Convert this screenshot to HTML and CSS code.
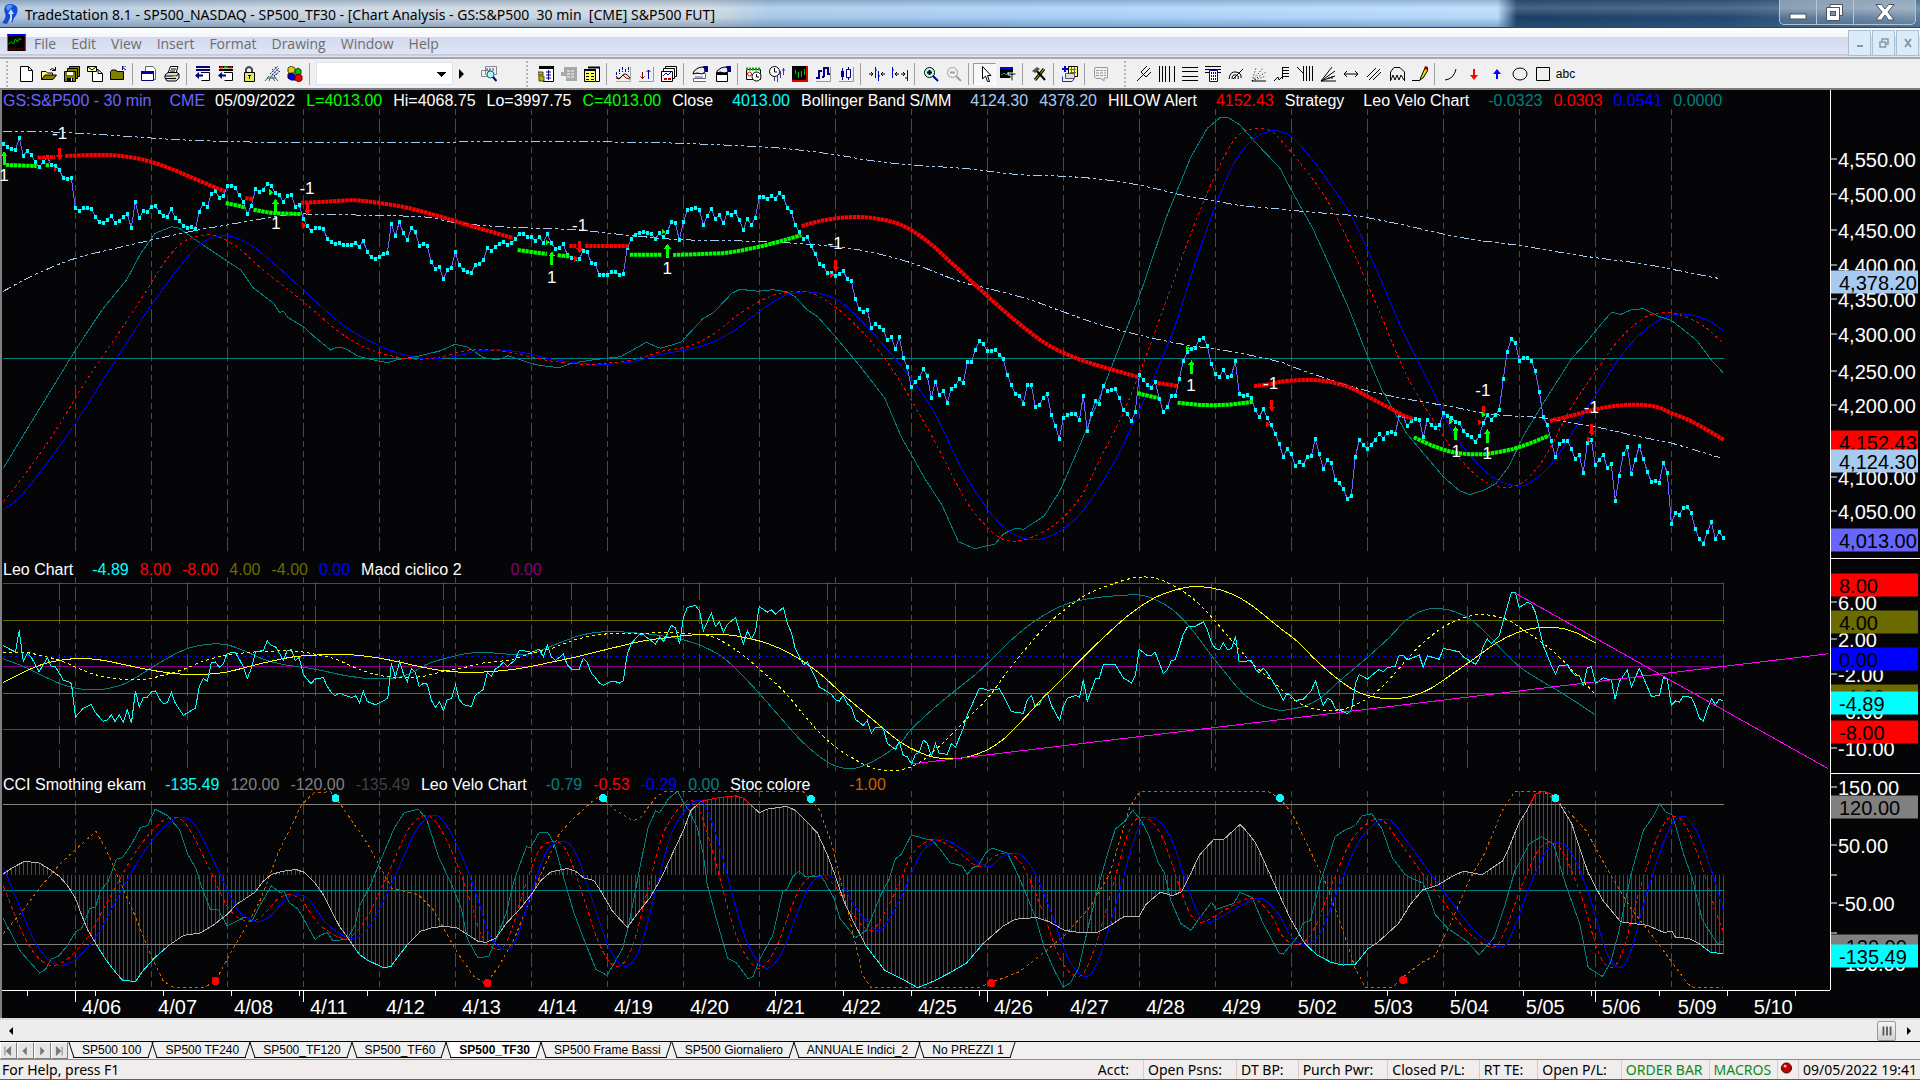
FILE: index.html
```html
<!DOCTYPE html>
<html lang="en">
  <head>
    <meta charset="UTF-8" />
    <meta name="viewport" content="width=device-width, initial-scale=1.0" />
    <title>TradeStation 8.1 - SP500_NASDAQ - SP500_TF30</title>
    <link rel="stylesheet" href="styles.css">
  </head>
  <body>
    <header class="titlebar">
      <svg class="app-icon" viewBox="0 0 18 22"><path d="M5 2Q12-1 16 4Q18 9 13 15L11 20L9 15L6 21L1 20Q6 14 4 10Q2 6 5 2Z" fill="#1549d8"/><path d="M10 6L13 11H11V17L9 19V11H7Z" fill="#c8dcff"/><path d="M5 3Q9 1 12 3L7 8Q5 6 5 3Z" fill="#4e9bff"/></svg>
      <h1>TradeStation 8.1 - SP500_NASDAQ - SP500_TF30 - [Chart Analysis - GS:S&amp;P500&nbsp; 30 min&nbsp; [CME] S&amp;P500 FUT]</h1>
      <div class="win-controls">
        <button aria-label="Minimize"><svg viewBox="0 0 24 20"><rect x="4" y="12" width="16" height="5" fill="#fff" stroke="#4a5260"/></svg></button>
        <button aria-label="Restore"><svg viewBox="0 0 24 20"><path d="M7 2.500H19.500V13.500H16.500V5.500H7Z" fill="#fff" stroke="#4a5260"/><path d="M3.500 5.500H16.500V18.500H3.500Z" fill="#fff" stroke="#4a5260"/><rect x="7.500" y="9.500" width="5" height="4" fill="#7d93ab" stroke="#4a5260"/></svg></button>
        <button class="close" aria-label="Close"><svg viewBox="0 0 24 20"><path d="M3 2.500H8.500L12 7L15.500 2.500H21L15 10L21 18H15.500L12 13L8.500 18H3L9 10Z" fill="#fff" stroke="#4a5260"/></svg></button>
      </div>
    </header>

    <nav class="menubar">
      <svg class="doc-icon" viewBox="0 0 18 17"><rect width="18" height="17"/><rect width="18" height="2" fill="#00f"/><path d="M1 10L4 8L6 10L8 5L10 8L12 4L14 6" fill="none" stroke="#0c0"/><path d="M1 15H16" stroke="#a00" stroke-dasharray="2 1"/><path d="M17.500 2V17" stroke="#800"/></svg>
      <button>File</button><button>Edit</button><button>View</button><button>Insert</button><button>Format</button><button>Drawing</button><button>Window</button><button>Help</button>
      <div class="mdi-controls">
        <button aria-label="Minimize chart"><svg viewBox="0 0 16 16"><path d="M5 11H11" stroke="#8397ab" stroke-width="2"/></svg></button>
        <button aria-label="Restore chart"><svg viewBox="0 0 16 16"><path d="M6 6V4H12V9H10M4 7H9.500V12H4Z" fill="none" stroke="#8397ab" stroke-width="1.500"/></svg></button>
        <button aria-label="Close chart"><svg viewBox="0 0 16 16"><path d="M5 4L11 12M11 4L5 12" stroke="#8397ab" stroke-width="2"/></svg></button>
      </div>
    </nav>

    <div class="toolbar">
      <i class="grip"></i>
      <button aria-label="New"><svg viewBox="0 0 16 16"><path d="M2.500 .5H10.500L14.500 4.500V15.500H2.500Z" fill="#fff" stroke="#000"/><path d="M10.500 .5V4.500H14.500" fill="none" stroke="#000"/></svg></button>
      <button aria-label="Open"><svg viewBox="0 0 16 16"><path d="M.5 13.500V5.500H5L6.500 7H11.500V9" fill="#ffff80" stroke="#000"/><path d="M.5 13.500L4 9H15.500L12 13.500Z" fill="#808000" stroke="#000"/><path d="M9 4Q11 1 14 4M14.500 1V4.500H11" fill="none" stroke="#000"/></svg></button>
      <button aria-label="Save all"><svg viewBox="0 0 16 16"><path d="M5.500 .5H15.500V10.500H5.500Z" fill="#808000" stroke="#000"/><path d="M3.500 2.500H13.500V12.500H3.500Z" fill="#808000" stroke="#000"/><path d="M.5 5.500H11.500V15.500H.5Z" fill="#808000" stroke="#000"/><path d="M3 6H9V9H3Z" fill="#fff"/><path d="M3 12H9V15H3Z"/><path d="M7 12H8V15H7Z" fill="#fff"/></svg></button>
      <button aria-label="Mail"><svg viewBox="0 0 16 16"><path d="M5.500 3.500H11L15.500 7.500V15.500H5.500Z" fill="#fff" stroke="#000"/><path d="M.5 .5H9.500V5.500H.5Z" fill="#ffffb0" stroke="#000"/><path d="M.5 .5L5 4L9.500 .5M11 4V7.500H15" fill="none" stroke="#000"/></svg></button>
      <button aria-label="Close folder"><svg viewBox="0 0 16 16"><path d="M.5 13.500V5.500L2 4H6L7 5.500H13.500V13.500Z" fill="#808000" stroke="#000"/><path d="M12 0H16M12.500 0V4M12 1L16 4" stroke="#000080" fill="none"/></svg></button>
      <i class="sep"></i>
      <button aria-label="Page"><svg viewBox="0 0 16 16"><path d="M4.500 .5H12L14.500 3.500V13.500H4.500Z" fill="#fff" stroke="#666"/><path d="M.5 5.500H12.500V14.500H.5Z" fill="#fff" stroke="#000080"/><path d="M0 5H13V8H0Z" fill="#0000a0"/></svg></button>
      <button aria-label="Print"><svg viewBox="0 0 16 16"><path d="M4 7L6.500 .5H14L12 7Z" fill="#fff" stroke="#000"/><path d="M1 9L4 6.500H13L15 8V12L12 15H3L1 12Z" fill="#ddd" stroke="#000"/><path d="M1 10H12L15 8M1 12.500H12M7 3H12M6 5H11" stroke="#000" fill="none"/><path d="M9 10H12V12H9Z" fill="#e8e000"/></svg></button>
      <i class="sep"></i>
      <button aria-label="Undo zoom"><svg viewBox="0 0 16 16"><path d="M1 1H15M1 4H15" stroke="#000080" stroke-width="2"/><path d="M6 6.500H14.500V14.500H6.500" fill="#fff" stroke="#000"/><path d="M0 9.500L4 6V8.500H8V10.500H4V13Z" fill="#000080"/></svg></button>
      <button aria-label="Colour rows"><svg viewBox="0 0 16 16"><path d="M1 1H15M1 4H15" stroke="#000" stroke-width="2"/><path d="M2 1.500H5M11 1.500H14" stroke="red" stroke-width="2"/><path d="M6 1.500H10" stroke="#0c0" stroke-width="2"/><path d="M6 6.500H14.500V14.500H6.500" fill="#fff" stroke="#000"/><path d="M0 9.500L4 6V8.500H8V10.500H4V13Z" fill="#000080"/></svg></button>
      <button aria-label="Lock"><svg viewBox="0 0 16 16"><path d="M5 7V3Q8 -1 11 3V7" fill="none" stroke="#444" stroke-width="2"/><path d="M3.500 6.500H13.500V15.500H3.500Z" fill="#e8e860" stroke="#000"/><path d="M7 9H10V10H9V13H8V10H7Z"/></svg></button>
      <button aria-label="Satellite"><svg viewBox="0 0 16 16"><path d="M1 15L5 10M5 15L7 10L11 15M10 10L14 15M3 12H12" stroke="#555" fill="none"/><path d="M5 11L9 7L11 10Z" fill="#40e0e0"/><path d="M6 8L14 0M8 9L15 2M10 10L16 5M8 3L13 9M11 1L15 6" stroke="#24248c" stroke-dasharray="2 1"/></svg></button>
      <button aria-label="Cubes"><svg viewBox="0 0 16 16"><path d="M1 2L4 0L8 2V6L4 8L1 6Z" fill="#e8c800" stroke="#443"/><path d="M8 4L11 2L14 4V8L11 9L8 8Z" fill="#00c000" stroke="#040"/><path d="M1 8L5 7L8 9V14L4 14L1 12Z" fill="#0000d0" stroke="#004"/><path d="M8 10L12 8L15 10V14L12 16L8 14Z" fill="#f00000" stroke="#600"/></svg></button>
      <i class="sep"></i>
      <select class="symbol" aria-label="Symbol"><option></option></select>
      <button class="go" aria-label="Go"><svg viewBox="0 0 16 16"><path d="M6 3L11 8L6 13Z"/></svg></button>
      <button class="lookup" aria-label="Symbol lookup"><svg viewBox="0 0 16 16"><path d="M4.500 .5H15.500V8.500H4.500ZM.5 4.500H9V10.500H.5Z" fill="#eee" stroke="#889"/><path d="M6 2V5M9 2V5M12 2V5" stroke="#447"/><circle cx="9.500" cy="8.500" r="3.500" fill="#aff" stroke="#256"/><path d="M12 11L15.500 15" stroke="#000080" stroke-width="2"/></svg></button>
      <i class="grip far"></i>
      <button aria-label="Symbol data"><svg viewBox="0 0 16 16"><path d="M1.500 1.500H15.500V15.500H5" fill="#fff" stroke="#000"/><path d="M1 1.500H16" stroke="#000" stroke-width="3"/><path d="M8 6H13M8 9H13M8 12H13M10.500 4V14" stroke="#000080"/><path d="M0 6H5V9H0ZM1 10H6V15H1Z" fill="#c0b000" stroke="#443"/></svg></button>
      <button disabled aria-label="Table"><svg viewBox="0 0 16 16"><path d="M3 1H16V15H5V10H0V6H3Z" fill="#a8a8a8"/><path d="M6 5H14M6 8H14M6 11H14" stroke="#fff" stroke-dasharray="3 1"/></svg></button>
      <button aria-label="Windows list"><svg viewBox="0 0 16 16"><path d="M4.500 1.500H15.500V15.500H12" fill="#fff" stroke="#000"/><path d="M.5 3.500H11.500V15.500H.5Z" fill="#ffff60" stroke="#000"/><path d="M0 4H12M4 1.500H16" stroke="#000" stroke-width="2"/><path d="M2 7.500H5M7 7.500H10M2 10.500H5M7 10.500H10M2 13.500H5M7 13.500H10" stroke="#000"/></svg></button>
      <i class="sep"></i>
      <button aria-label="Indicator"><svg viewBox="0 0 16 16"><path d="M15.500 1V15.500H1" stroke="#aaa" fill="none"/><path d="M1.500 6V10M4.500 3V8M7.500 1V6M10.500 3V7M13.500 1V6" stroke="#0000c0" stroke-dasharray="3 1"/><path d="M1 12L4 13L8 9L11 12L15 13" stroke="#a00000" fill="none"/><path d="M1 10Q4 15 7 10T15 12" stroke="#000" fill="none"/></svg></button>
      <button aria-label="Signals"><svg viewBox="0 0 16 16"><path d="M15.500 1V15.500H1" stroke="#999" fill="none"/><path d="M4.500 6V12.500M2.500 10.500L4.500 12.500L6.500 10.500" stroke="#900000" fill="none"/><path d="M10.500 13V4M8.500 6L10.500 4L12.500 6" stroke="#000090" fill="none"/></svg></button>
      <button aria-label="Strategies"><svg viewBox="0 0 16 16"><path d="M4.500 .5H15.500V10.500H4.500Z" fill="#fff" stroke="#000"/><path d="M2.500 2.500H13.500V12.500H2.500Z" fill="#fff" stroke="#000"/><path d="M.5 5.500H11.500V15.500H.5Z" fill="#fff" stroke="#000"/><path d="M2 10L5 7L7 9L10 6" stroke="#0000c0" fill="none"/><path d="M3 13H6M7 13H10" stroke="#c00000" stroke-width="2"/></svg></button>
      <i class="sep"></i>
      <button aria-label="Format symbol"><svg viewBox="0 0 16 16"><path d="M3.500 7.500H13.500V12.500H1.500V15.500H14" fill="#fff" stroke="#667"/><path d="M2 5L6 2L10 1L13 2V6L10 8L5 7L1 8Z" fill="#eee" stroke="#000"/><path d="M11 0H16V6H13Z" fill="#000080"/><path d="M3 11H11" stroke="#4060c0"/></svg></button>
      <button aria-label="Format window"><svg viewBox="0 0 16 16"><path d="M1.500 6.500H12.500V15.500H1.500Z" fill="#fff" stroke="#000"/><path d="M1 8H13" stroke="#000" stroke-width="2"/><path d="M2 5L6 2L10 1L13 2V6L9 7L5 6L2 7Z" fill="#eee" stroke="#000"/><path d="M11 0H16V6H13Z" fill="#000080"/></svg></button>
      <i class="sep"></i>
      <button aria-label="Sessions"><svg viewBox="0 0 16 16"><path d="M.5 3.500H14.500V13.500H.5Z" fill="#fff" stroke="#000"/><path d="M0 3H15" stroke="#00b000" stroke-width="3" stroke-dasharray="2 1"/><circle cx="10.500" cy="10.500" r="4.500" fill="#fff" stroke="#000"/><path d="M10.500 8V11H13" stroke="#000" fill="none"/><circle cx="3.500" cy="8" r="2" fill="none" stroke="red"/></svg></button>
      <button aria-label="Interval"><svg viewBox="0 0 16 16"><circle cx="5.500" cy="5.500" r="5" fill="#fff" stroke="#000"/><path d="M5.500 2V6H8" stroke="#000" fill="none"/><path d="M5.500 11V15M8.500 10V16M11.500 5V12M14.500 2V9M10 8H12M13 4H16" stroke="#3838a8"/></svg></button>
      <button aria-label="Bar chart"><svg viewBox="0 0 16 16"><path d="M0 0H16V16H0Z"/><path d="M15 0V15H0" stroke="#e00000" stroke-width="2" fill="none"/><path d="M3.500 4V8M6.500 6V12M9.500 5V11M12.500 3V9" stroke="#00d000"/></svg></button>
      <button aria-label="OHLC bars"><svg viewBox="0 0 16 16"><path d="M15.500 1V15.500H1" stroke="#999" fill="none"/><path d="M4 4V13M1 12H4M4 5H7M9 1V11M9 2H13M13 1V9M7 11H9M13 8H15" stroke="#000080" stroke-width="2"/></svg></button>
      <button aria-label="Candlesticks"><svg viewBox="0 0 16 16"><path d="M15.500 1V15.500H1" stroke="#999" fill="none"/><path d="M4.500 2V14M10.500 1V14" stroke="#000080"/><path d="M3 5H6V11H3Z" fill="#000080"/><path d="M8.500 3.500H12.500V11.500H8.500Z" fill="#fff" stroke="#000080"/></svg></button>
      <i class="sep"></i>
      <button aria-label="Tighten bars"><svg viewBox="0 0 16 16"><path d="M0 8H4M2 6L4 8L2 10M16 8H12M14 6L12 8L14 10" stroke="#000" fill="none"/><path d="M6.500 1V12M9.500 5V15M6 4H8M9 10H11" stroke="#0000c0"/></svg></button>
      <button aria-label="Widen bars"><svg viewBox="0 0 16 16"><path d="M3 8H7M5 6L3 8L5 10M13 8H9M11 6L13 8L11 10" stroke="#000" fill="none"/><path d="M.5 1V12M15.500 4V15M0 4H2M13 12H16" stroke="#0000c0"/></svg></button>
      <i class="sep"></i>
      <button aria-label="Zoom in"><svg viewBox="0 0 16 16"><circle cx="6.500" cy="6.500" r="5" fill="#bff" stroke="#000"/><path d="M4 6.500H9M6.500 4V9" stroke="#000" stroke-width="2"/><path d="M10 10L15 15" stroke="#000080" stroke-width="2"/></svg></button>
      <button disabled aria-label="Zoom out"><svg viewBox="0 0 16 16"><circle cx="6.500" cy="6.500" r="5" fill="none" stroke="#a0a0a0"/><path d="M4 6.500H9M10 10L15 15" stroke="#a0a0a0" stroke-width="2"/></svg></button>
      <i class="sep"></i>
      <button class="pressed" aria-label="Pointer"><svg viewBox="0 0 16 16"><path d="M5.500 .5V13L8.500 10L10.500 15.500H12.500L10.500 9.500H14Z" fill="#fff" stroke="#000"/></svg></button>
      <button aria-label="Data tip"><svg viewBox="0 0 16 16"><path d="M0 1H13V12H0Z"/><path d="M0 1H13V3H0Z" fill="#0000e0"/><path d="M1 9L4 7L6 9L8 6L10 8" stroke="#00d000" fill="none"/><path d="M8 7H16V9H13V15H11V9H8Z" stroke="#fff"/></svg></button>
      <i class="sep"></i>
      <button aria-label="Tools"><svg viewBox="0 0 16 16"><path d="M4 14L13 3" stroke="#000" stroke-width="3"/><path d="M4 14L13 3" stroke="#d8c800"/><path d="M5 4L14 14" stroke="#000" stroke-width="2"/><path d="M1 5L6 1L9 3L4 7Z" fill="#554"/></svg></button>
      <i class="sep"></i>
      <button aria-label="Add window"><svg viewBox="0 0 16 16"><path d="M0 3H6M3 0V6" stroke="#0000e0" stroke-width="2"/><path d="M6.500 .5H15.500V10.500H6.500Z" fill="#ffff60" stroke="#000"/><path d="M8 3.500H14M8 6.500H14M9.500 1V9M12.500 1V9" stroke="#665"/><path d="M3.500 7.500H12.500V12.500H3.500Z" fill="#ddd" stroke="#556"/><path d="M.5 10.500V15.500H10L12 13" fill="none" stroke="#2030a0"/></svg></button>
      <i class="sep"></i>
      <button disabled aria-label="Notes"><svg viewBox="0 0 16 16"><path d="M2 1.500H14.500V12H11V15L8 12.500H3L1.500 11V3Z" fill="none" stroke="#999"/><path d="M3 4.500H13M3 7H13M3 9.500H13" stroke="#999" stroke-dasharray="3 1"/></svg></button>
      <i class="grip draw"></i>
      <button aria-label="Andrew's pitchfork"><svg viewBox="0 0 16 16"><path d="M1 15L8 8M5 6L10 11M5 6L11 0M8 8L14 2M10 11L15 6" stroke="#000" fill="none"/></svg></button>
      <button aria-label="Vertical lines"><svg viewBox="0 0 16 16"><path d="M.5 0V16M3.500 0V16M6.500 0V16M10.500 0V16M15.500 0V16" stroke="#000"/></svg></button>
      <button aria-label="Horizontal lines"><svg viewBox="0 0 16 16"><path d="M0 1.500H16M0 5.500H16M0 10.500H16M0 14.500H16" stroke="#000"/></svg></button>
      <button aria-label="Price calculator"><svg viewBox="0 0 16 16"><path d="M0 .5H16M0 3.500H16M0 6.500H16" stroke="#000"/><path d="M4.500 4.500H12.500V15.500H4.500Z" fill="#fff" stroke="#0000a0"/><path d="M6 7H11M6 10H11M6 13H11" stroke="#0000a0" stroke-dasharray="1 1" stroke-width="2"/></svg></button>
      <button aria-label="Speed arcs"><svg viewBox="0 0 16 16"><path d="M1 13Q2 5 8 6T13 12M4 13Q4 8 8 9T10 13M5 13L15 3M7 11V13" stroke="#000" fill="none"/></svg></button>
      <button aria-label="Speed lines"><svg viewBox="0 0 16 16"><path d="M1 15L5 2M1 15L12 2M1 15L15 6M1 15L15 10" stroke="#000" stroke-dasharray="1 2"/><path d="M1 15H15" stroke="#000"/></svg></button>
      <button aria-label="Percent retracement"><svg viewBox="0 0 16 16"><path d="M0 15L4 11L5 14L9 10M8.500 1V13M9 1.500H15M9 4.500H15M9 7.500H15M9 10.500H15" stroke="#000" fill="none"/></svg></button>
      <button aria-label="Time cycles"><svg viewBox="0 0 16 16"><path d="M0 1L6 7M6.500 0V15M9.500 0V15M12.500 0V15M15.500 0V15" stroke="#000"/></svg></button>
      <button aria-label="Gann fan"><svg viewBox="0 0 16 16"><path d="M1 15L12 1M1 15L15 5M1 15L15 10M1 15H16M9 11V13M12 10V13" stroke="#000"/></svg></button>
      <button aria-label="Extended line"><svg viewBox="0 0 16 16"><path d="M1 8H15M4 5L1 8L4 11M12 5L15 8L12 11" stroke="#000" fill="none"/></svg></button>
      <button aria-label="Parallel lines"><svg viewBox="0 0 16 16"><path d="M1 11L10 2M3 14L14 3M7 14L15 6" stroke="#000"/></svg></button>
      <button aria-label="Arcs"><svg viewBox="0 0 16 16"><path d="M1.500 15V6L5 1.500H11L15.500 6V15M2 14L4 9L6 14M6 14L8 9L10 14M10 14L12 9L15 14" stroke="#000" fill="none"/></svg></button>
      <button aria-label="Pencil"><svg viewBox="0 0 16 16"><path d="M0 14.500H8" stroke="#000"/><path d="M9 11L13 2L16 4L11 12L8 14Z" fill="#e8e000" stroke="#000"/><path d="M13 0L16 1V4L12 3Z" fill="#a00000"/></svg></button>
      <i class="sep"></i>
      <button aria-label="Arc"><svg viewBox="0 0 16 16"><path d="M2 14Q11 13 13 3" stroke="#000" fill="none"/></svg></button>
      <button aria-label="Down arrow"><svg viewBox="0 0 16 16"><path d="M7 3H9V9H12L8 14L4 9H7Z" fill="red"/></svg></button>
      <button aria-label="Up arrow"><svg viewBox="0 0 16 16"><path d="M7 13H9V8H12L8 3L4 8H7Z" fill="#00f"/></svg></button>
      <button aria-label="Ellipse"><svg viewBox="0 0 16 16"><ellipse cx="8" cy="8" rx="7" ry="6" fill="none" stroke="#000"/></svg></button>
      <button aria-label="Rectangle"><svg viewBox="0 0 16 16"><path d="M1.500 1.500H14.500V14.500H1.500Z" fill="none" stroke="#000"/></svg></button>
      <button class="text-tool">abc</button>
    </div>

    <main class="chart">
      <section class="pane" id="price">
        <div class="plot">
          <p class="legend"><b class="sym">GS:S&amp;P500 - 30 min</b><b class="sym tight">CME</b><span class="white">05/09/2022</span><span class="lime">L=4013.00</span><span class="white">Hi=4068.75</span><span class="white">Lo=3997.75</span><span class="lime">C=4013.00</span><b>Close</b><span class="cyan">4013.00</span><b>Bollinger Band S/MM</b><span class="band">4124.30</span><span class="band">4378.20</span><b>HILOW Alert</b><span class="red">4152.43</span><b>Strategy</b><b>Leo Velo Chart</b><span class="teal">-0.0323</span><span class="red">0.0303</span><span class="blue">0.0541</span><span class="teal">0.0000</span></p>
          <svg class="canvas" viewBox="2 110 1828 449" preserveAspectRatio="none"></svg>
        </div>
        <div class="scale"></div>
      </section>
      <section class="pane" id="leo">
        <div class="plot">
          <p class="legend"><b>Leo Chart</b><span class="cyan">-4.89</span><span class="red">8.00</span><span class="red">-8.00</span><span class="olive">4.00</span><span class="olive">-4.00</span><span class="blue">0.00</span><b class="wide">Macd ciclico 2</b><span class="purple">0.00</span></p>
          <svg class="canvas" viewBox="2 579 1828 195" preserveAspectRatio="none"></svg>
        </div>
        <div class="scale"></div>
      </section>
      <section class="pane" id="cci">
        <div class="plot">
          <p class="legend"><b>CCI Smothing ekam</b><span class="cyan">-135.49</span><span class="gray">120.00</span><span class="gray">-120.00</span><span class="dim">-135.49</span><b>Leo Velo Chart</b><span class="teal">-0.79</span><span class="red">-0.53</span><span class="blue">-0.29</span><span class="teal">0.00</span><b class="wider">Stoc colore</b><span class="orange">-1.00</span></p>
          <svg class="canvas" viewBox="2 794 1828 196" preserveAspectRatio="none"></svg>
        </div>
        <div class="scale"></div>
      </section>
      <div class="timeline">
        <svg class="ticks" viewBox="2 0 1828 27" preserveAspectRatio="none"></svg>
        <ol class="dates"></ol>
      </div>
    </main>

    <div class="scrollbar">
      <button aria-label="Scroll left"><svg viewBox="0 0 16 16"><path d="M10 4V12L6 8Z"/></svg></button>
      <button class="thumb" aria-label="Scroll thumb"><svg viewBox="0 0 18 16"><path d="M5 3V13M9 3V13M13 3V13" stroke="#555" stroke-width="2"/></svg></button>
      <button aria-label="Scroll right"><svg viewBox="0 0 16 16"><path d="M6 4V12L10 8Z"/></svg></button>
    </div>

    <nav class="tabs">
      <button class="step" aria-label="First"><svg viewBox="0 0 16 16"><path d="M4.500 3V13M11 3V13L6 8Z" fill="#777" stroke="#777"/></svg></button>
      <button class="step" aria-label="Previous"><svg viewBox="0 0 16 16"><path d="M10 3V13L5 8Z" fill="#777"/></svg></button>
      <button class="step" aria-label="Next"><svg viewBox="0 0 16 16"><path d="M6 3V13L11 8Z" fill="#777"/></svg></button>
      <button class="step" aria-label="Last"><svg viewBox="0 0 16 16"><path d="M11.500 3V13M5 3V13L10 8Z" fill="#777" stroke="#777"/></svg></button>
      <button class="tab">SP500 100</button>
      <button class="tab">SP500 TF240</button>
      <button class="tab">SP500_TF120</button>
      <button class="tab">SP500_TF60</button>
      <button class="tab active">SP500_TF30</button>
      <button class="tab">SP500 Frame Bassi</button>
      <button class="tab">SP500 Giornaliero</button>
      <button class="tab">ANNUALE Indici_2</button>
      <button class="tab">No PREZZI 1</button>
    </nav>

    <footer class="status">
      <span class="help">For Help, press F1</span>
      <span>Acct:</span><span>Open Psns:</span><span>DT BP:</span><span>Purch Pwr:</span><span>Closed P/L:</span><span>RT TE:</span><span>Open P/L:</span>
      <span class="on">ORDER BAR</span><span class="on">MACROS</span>
      <span class="led"><svg viewBox="0 0 12 12"><circle cx="6" cy="6" r="5.500" fill="#c00000" stroke="#200"/><circle cx="4.500" cy="4" r="1.500" fill="#ffb0b0"/></svg></span>
      <span class="clock">09/05/2022 19:41</span>
    </footer>
    <script src="script.js"></script>
  </body>
</html>
```

FILE: styles.css
```css
* {
  margin: 0;
  padding: 0;
  box-sizing: border-box;
}

body {
  display: flex;
  flex-direction: column;
  height: 100vh;
  overflow: hidden;
  background: #f0f0f0;
  color: #000;
  font-family: "Open Sans", "Noto Sans", sans-serif;
  font-size: 14px;
}

button {
  border: none;
  background: none;
  font: inherit;
  color: inherit;
}

svg {
  display: block;
}

/* title bar */
.titlebar {
  display: flex;
  align-items: center;
  flex: 0 0 28px;
  padding-left: 1px;
  border-bottom: 1px solid #39424e;
  background:
    linear-gradient(rgba(70, 100, 130, 0.3), rgba(255, 255, 255, 0.2) 30%, rgba(255, 255, 255, 0) 65%, rgba(60, 95, 135, 0.4)),
    linear-gradient(90deg, #a9c2dc, #c3d1df 15%, #cbd5df 37%, #a5c6e6 40%, #a4cdf7 55%, #b4d8fb 78%, #1b3d64 79%, #24496f 90%, #597b9b);
}

.app-icon {
  width: 18px;
  height: 22px;
}

.titlebar h1 {
  flex: 1;
  margin-left: 6px;
  padding-top: 1px;
  font-family: "Noto Sans", sans-serif;
  font-size: 14px;
  font-weight: 400;
  white-space: nowrap;
}

.win-controls {
  display: flex;
  align-self: flex-start;
  height: 25px;
  margin-right: 4px;
  border: 1px solid #b5c4d3;
  border-top: none;
  border-radius: 0 0 5px 5px;
  background: linear-gradient(rgba(255, 255, 255, 0.4), rgba(255, 255, 255, 0.1));
}

.win-controls button {
  width: 37px;
  border-right: 1px solid #b5c4d3;
}

.win-controls .close {
  width: 61px;
  border: none;
}

.win-controls svg {
  width: 24px;
  height: 20px;
  margin: 0 auto;
}

/* menu */
.menubar {
  display: flex;
  align-items: center;
  flex: 0 0 31px;
  padding-left: 7px;
  border-bottom: 2px solid #a5a8b0;
  background: linear-gradient(#fff, #f3f5fa 30%, #d3daec 32%, #dfe5f5 90%, #b9bfd0 92%, #f0f0f0);
  color: #6d6d6d;
}

.menubar > button {
  padding: 1px 7px 0 8px;
}

.doc-icon {
  width: 19px;
  height: 17px;
}

.mdi-controls {
  display: flex;
  gap: 1px;
  align-self: flex-start;
  margin: 2px 1px 0 auto;
}

.mdi-controls button {
  width: 23px;
  height: 26px;
  border: 1px solid #a7c0d6;
  background: #dcebf8;
}

.mdi-controls svg {
  width: 16px;
  height: 16px;
  margin: 0 auto;
}

/* toolbar */
.toolbar {
  display: flex;
  align-items: center;
  flex: 0 0 31px;
  padding-left: 6px;
  border-bottom: 2px solid #7d7d7d;
  background: #f0f0f0;
}

.toolbar button {
  flex: none;
  width: 23px;
  height: 22px;
}

.toolbar svg {
  width: 16px;
  height: 16px;
  margin: 0 auto;
}

.toolbar .pressed {
  border: 1px solid #999;
  border-color: #999 #fff #fff #999;
  background: #f8f8f8;
}

.sep {
  flex: none;
  width: 1px;
  height: 22px;
  margin: 0 4px 0 3px;
  background: #a0a0a0;
}

.grip {
  flex: none;
  width: 3px;
  height: 26px;
  margin-right: 5px;
  border-left: 2px dotted #b5b5b5;
}

.grip.far {
  margin-left: 25px;
}

.grip.draw {
  margin-left: 12px;
}

.symbol {
  flex: none;
  width: 137px;
  height: 23px;
  margin-left: 2px;
  appearance: none;
  border: 1px solid #dde3ea;
  background: linear-gradient(#000, #000) right 6px top 9px / 9px 1px no-repeat,
    linear-gradient(#000, #000) right 7px top 10px / 7px 1px no-repeat,
    linear-gradient(#000, #000) right 8px top 11px / 5px 1px no-repeat,
    linear-gradient(#000, #000) right 9px top 12px / 3px 1px no-repeat,
    linear-gradient(#000, #000) right 10px top 13px / 1px 1px no-repeat, #fff;
}

.toolbar .go {
  width: 16px;
}

.toolbar .lookup {
  width: 25px;
  margin-left: 7px;
}

.toolbar .text-tool {
  font: 12px "Liberation Sans", Arial, sans-serif;
}

/* chart window */
.chart {
  display: grid;
  grid-template-rows: 469fr 215fr 216fr 28px;
  flex: 1;
  min-height: 0;
  border-left: 2px solid #808080;
  background: #050507;
  color: #fff;
  font-family: "Liberation Sans", Arial, sans-serif;
}

.pane {
  display: grid;
  grid-template-columns: 1fr 90px;
  min-height: 0;
}

.plot {
  display: flex;
  flex-direction: column;
  min-width: 0;
  min-height: 0;
}

.legend {
  flex: none;
  height: 20px;
  padding-left: 1px;
  font-size: 16px;
  line-height: 21px;
  white-space: nowrap;
}

.legend b {
  margin-right: 19px;
  font-weight: 400;
}

.legend span {
  margin-right: 11px;
}

.legend .sym {
  margin-right: 18px;
  color: #6666ff;
}

.legend .tight {
  margin-right: 10px;
}

.legend .wide {
  margin-right: 49px;
}

.legend .wider {
  margin-right: 39px;
}

.cyan { color: #00ffff; }
.lime { color: #00ff00; }
.red { color: #ff0000; }
.blue { color: #0000ff; }
.teal { color: #008080; }
.olive { color: #6b6b00; }
.purple { color: #800080; }
.gray { color: #808080; }
.dim { color: #404040; }
.orange { color: #c86400; }
.band { color: #a6caf0; }

.canvas {
  flex: 1;
  width: 100%;
  min-height: 0;
  overflow: visible;
  shape-rendering: crispEdges;
}

.canvas text {
  fill: #fff;
  font-size: 17px;
  text-anchor: middle;
}

.scale {
  position: relative;
  border-left: 1px solid #fff;
  border-bottom: 1px solid #fff;
}

#cci .scale {
  border-bottom: none;
}

.scale span {
  position: absolute;
  right: 0;
  left: 0;
  height: 23px;
  padding-left: 7px;
  font-size: 20px;
  line-height: 25px;
  transform: translateY(-50%);
}

.scale span::before {
  content: "";
  position: absolute;
  left: 0;
  top: 11px;
  width: 6px;
  height: 1px;
  background: #fff;
}

.scale .tag {
  margin-right: 2px;
  padding-left: 8px;
  color: #000;
}

.scale .tag::before {
  display: none;
}

.timeline {
  position: relative;
  margin-right: 90px;
  border-top: 1px solid #fff;
}

.ticks {
  position: absolute;
  width: 100%;
  height: 27px;
}

.dates {
  display: flex;
  padding: 4px 0 0 4%;
  list-style: none;
}

.dates li {
  flex: 0 0 4.33%;
  padding-left: 7px;
  font-size: 20px;
  line-height: 24px;
}

/* bottom bars */
.scrollbar {
  display: flex;
  align-items: center;
  flex: 0 0 23px;
  border-top: 2px solid #dcdcdc;
  background: #ededed;
}

.scrollbar button {
  width: 22px;
  height: 20px;
}

.scrollbar svg {
  width: 16px;
  height: 16px;
  margin: 0 auto;
}

.scrollbar .thumb {
  width: 19px;
  margin: 0 2px 0 auto;
  border: 1px solid #999;
  border-radius: 2px;
  background: linear-gradient(#f5f5f5, #d0d0d0);
}

.tabs {
  display: flex;
  flex: 0 0 18px;
  border-top: 1px solid #000;
  background: #f0f0f0;
  font: 12px "Liberation Sans", Arial, sans-serif;
}

.step {
  width: 17px;
  height: 17px;
  border: 1px solid;
  border-color: #fff #808080 #808080 #fff;
  background: #e6e6e6;
}

.step svg {
  width: 14px;
  height: 14px;
}

.tab {
  position: relative;
  height: 16px;
  margin-right: -2px;
  padding: 0 12px 0 14px;
  white-space: nowrap;
}

.tab::before,
.tab::after {
  content: "";
  position: absolute;
  top: 0;
  bottom: 0;
  left: 3px;
  right: 50%;
  border-left: 1px solid #000;
  border-bottom: 1px solid #000;
  transform: skewX(18deg);
}

.tab::after {
  left: 50%;
  right: 3px;
  border-left: none;
  border-right: 1px solid #000;
  transform: skewX(-18deg);
}

.tab.active {
  background: linear-gradient(#fff, #fff) center / 88px 100% no-repeat;
  font-weight: 700;
}

.status {
  display: flex;
  flex: 0 0 21px;
  min-height: 0;
  border-top: 1px solid #8c8c8c;
  border-bottom: 1px solid #51617a;
  background: #f0edec;
  font-family: "Noto Sans", sans-serif;
  line-height: 20px;
  white-space: nowrap;
}

.status span {
  padding: 0 14px 0 4px;
  border-left: 1px solid #d2cecd;
}

.status .help {
  flex: 1;
  padding-left: 2px;
  border: none;
}

.status .help + span {
  border: none;
}

.status .on {
  padding-right: 6px;
  color: #0c8a1c;
}

.status .led {
  padding: 2px 6px 0 3px;
}

.led svg {
  width: 11px;
  height: 12px;
}

.status .clock {
  padding-right: 3px;
}
```

FILE: script.js
```js
const NS = "http://www.w3.org/2000/svg";

// Series are digitised per third of the plot, thirds separated by "|".
const THIRD = 1568;
const UNIT_X = 2.45;
const priceUnit = { top: 100, y: 3 };
const lowerUnit = { top: 550, y: 2.958 };

const FIRST_X = 3.3;
const BAR = 4;
const LAST_X = 1723.5;

function points(data, unit, shift = 0) {
  return data.split("|").flatMap((part, i) =>
    part.trim().split(/\s+/).filter(Boolean).map((pair) => {
      const [x, y] = pair.split(",").map(Number);
      return [(x + i * THIRD + shift) / UNIT_X, unit.top + y / unit.y];
    })
  );
}

function add(svg, name, attrs, text) {
  const el = document.createElementNS(NS, name);
  for (const key in attrs) el.setAttribute(key, attrs[key]);
  if (text) el.textContent = text;
  svg.appendChild(el);
  return el;
}

const fmt = (n) => n.toFixed(1);

function straight(pts) {
  return "M" + pts.map(([x, y]) => `${fmt(x)} ${fmt(y)}`).join("L");
}

function curve(pts) {
  let d = `M${fmt(pts[0][0])} ${fmt(pts[0][1])}`;
  for (let i = 0; i < pts.length - 1; i++) {
    const p0 = pts[i - 1] || pts[i];
    const p1 = pts[i];
    const p2 = pts[i + 1];
    const p3 = pts[i + 2] || p2;
    d += `C${fmt(p1[0] + (p2[0] - p0[0]) / 6)} ${fmt(p1[1] + (p2[1] - p0[1]) / 6)} ${fmt(p2[0] - (p3[0] - p1[0]) / 6)} ${fmt(p2[1] - (p3[1] - p1[1]) / 6)} ${fmt(p2[0])} ${fmt(p2[1])}`;
  }
  return d;
}

function line(svg, d, color, extra = {}) {
  return add(svg, "path", { d, fill: "none", stroke: color, ...extra });
}

function hline(svg, y, color, extra) {
  line(svg, `M3 ${y}H${LAST_X}`, color, extra);
}

function dayGrid(svg, top, bottom) {
  for (let x = 75.5; x < 1720; x += 76) {
    line(svg, `M${x} ${top}V${bottom}`, "#484848", { "stroke-dasharray": "6 4 14 4 6 4" });
  }
}

function valueAt(pts, x) {
  let i = 1;
  while (i < pts.length - 1 && pts[i][0] < x) i++;
  const [x0, y0] = pts[i - 1];
  const [x1, y1] = pts[i];
  return y0 + ((y1 - y0) * (x - x0)) / (x1 - x0);
}

/* ---------- price pane ---------- */

const close = "8,132 18,141 28,147 38,149 47,114 57,167 67,153 77,165 87,186 96,201 106,186 116,171 126,196 136,197 145,210 155,234 165,237 175,234 185,324 194,333 204,324 224,326 233,351 243,366 253,369 263,360 273,348 282,369 292,363 302,351 312,342 322,384 332,305 341,354 351,333 361,336 371,321 381,318 390,336 400,347 410,351 420,327 429,353 439,362 449,377 459,383 469,381 479,387 488,335 498,311 508,321 518,282 528,273 537,293 547,288 557,257 567,258 577,263 587,285 596,306 606,343 616,317 626,268 635,275 645,270 655,251 665,257 675,279 684,285 694,306 704,287 714,284 723,320 733,315 743,357 753,378 762,393 772,383 792,386 802,416 812,426 821,432 831,429 841,435 861,436 871,429 881,440 890,422 900,456 910,471 920,477 930,470 940,461 950,460 959,371 969,408 979,366 988,399 998,420 1008,383 1018,396 1027,437 1037,432 1047,437 1057,486 1067,507 1077,501 1086,538 1096,510 1106,504 1116,456 1125,495 1135,510 1145,516 1155,519 1164,495 1174,492 1184,480 1194,443 1204,453 1213,441 1223,432 1233,426 1243,435 1253,429 1262,417 1272,402 1282,401 1292,411 1302,411 1311,423 1321,411 1331,429 1341,402 1351,429 1361,446 1370,444 1380,432 1390,465 1400,474 1410,476 1419,477 1429,452 1439,456 1449,489 1458,492 1468,525 1488,524 1498,516 1508,516 1517,525 1527,521 1537,444 1547,416 1557,405 1566,399 |"
  + "8,396 20,400 30,402 38,417 48,399 57,411 67,396 77,365 87,369 96,420 106,366 116,329 126,326 136,324 146,329 155,376 165,348 175,327 185,357 195,345 204,369 214,339 224,345 234,336 243,360 253,390 263,356 273,375 283,354 292,291 302,290 312,297 322,287 332,297 341,279 351,291 361,324 371,336 380,375 390,396 400,417 410,411 420,438 430,462 439,492 449,498 459,519 469,520 479,528 488,521 498,513 508,537 518,543 528,597 538,627 547,636 557,629 567,684 577,672 586,681 596,689 606,720 616,711 626,747 635,711 645,773 655,801 665,861 675,846 684,833 694,807 704,827 714,893 724,845 733,885 743,873 753,909 763,866 773,858 782,837 792,849 802,786 812,786 821,750 831,722 841,731 851,753 871,750 880,764 890,777 900,824 910,855 920,881 929,887 939,911 949,855 959,855 968,920 978,914 988,894 998,882 1008,944 1018,977 1027,1017 1037,954 1047,944 1067,942 1077,960 1086,887 1096,993 1106,941 1116,902 1125,911 1135,857 1145,873 1165,867 1174,893 1184,929 1194,941 1204,963 1214,936 1223,825 1233,839 1243,855 1253,863 1262,846 1272,896 1282,936 1292,921 1302,887 1311,887 1321,837 1331,783 1341,755 1351,747 1361,743 1370,719 1380,713 1390,738 1400,791 1410,822 1420,831 1429,809 1439,831 1449,828 1459,782 1468,881 1478,888 1488,885 1498,894 1508,930 1517,951 1527,927 1537,953 1547,975 1557,1001 1566,1032 |"
  + "8,1070 18,1047 28,1062 38,1098 47,1085 57,1095 67,1071 77,1067 87,1017 96,1062 106,1107 116,1080 126,1088 136,1139 145,1149 155,1166 165,1196 175,1187 185,1070 194,1020 214,1047 224,1034 233,1020 243,1001 253,1017 263,998 273,996 282,1001 292,944 302,949 312,978 322,963 332,957 341,960 351,1011 361,960 371,976 381,984 390,975 400,939 410,948 420,953 430,966 439,969 449,992 459,1005 469,1011 479,1026 488,1008 498,968 508,945 518,959 528,945 537,930 547,836 557,755 567,716 577,728 586,782 596,773 606,773 616,783 626,813 635,875 645,951 655,975 665,1023 675,1071 684,1032 694,1023 704,1023 714,1046 723,1077 733,1065 743,1118 753,1029 763,1020 773,1095 782,1080 792,1065 802,1104 812,1092 821,1202 831,1127 841,1062 851,1041 861,1121 871,1080 880,1038 890,1076 900,1115 910,1145 920,1143 930,1148 939,1088 949,1118 959,1271 969,1239 978,1244 988,1224 998,1221 1008,1239 1018,1287 1027,1317 1037,1331 1047,1296 1057,1266 1067,1316 1076,1296 1086,1314";

const upperBand = "8,94 80,94 180,99 300,108 420,118 540,124 660,127 800,128 1000,128 1200,125 1400,125 1566,127 | 100,130 220,136 350,145 480,164 560,181 665,195 800,206 920,223 1040,229 1130,238 1230,257 1320,283 1410,303 1480,318 1566,327 | 80,337 180,347 280,369 400,402 480,420 590,437 700,460 773,473 880,490 960,508 1078,536";
const lowerBand = "8,574 80,527 180,477 300,440 460,396 560,374 690,347 743,342 900,346 1040,351 1110,367 1200,378 1300,384 1410,389 1480,398 1566,409 | 100,419 250,423 380,430 480,440 560,455 660,487 780,543 850,565 950,597 1040,637 1130,675 1240,710 1340,735 1450,755 1566,785 | 30,800 100,830 190,865 300,895 420,920 520,943 640,953 720,970 790,985 880,1010 960,1030 1078,1073";
const veloBlue = "8,1230 50,1190 115,1090 190,960 270,805 370,617 440,500 490,433 530,410 570,411 620,440 680,500 743,570 830,665 900,720 970,757 1040,776 1110,770 1170,753 1230,750 1290,760 1350,777 1420,790 1480,793 1540,787 | 0,780 60,761 120,748 180,725 230,692 292,635 340,595 390,577 440,580 490,605 540,660 600,740 665,837 720,935 790,1110 850,1225 900,1290 950,1318 1000,1311 1060,1265 1110,1190 1165,1080 1214,955 1260,830 1310,680 1360,490 1420,285 1460,180 1500,120 1545,92 | 0,95 28,110 80,180 130,265 180,360 240,520 300,690 370,860 430,1010 500,1110 540,1145 580,1158 610,1150 660,1100 710,1010 760,910 830,777 880,705 930,660 970,643 1010,645 1050,662 1086,692";
const veloRed = "8,1205 70,1108 140,985 210,845 290,700 360,570 410,475 450,425 490,407 530,408 580,440 640,505 743,605 830,695 900,745 980,773 1040,777 1090,768 1150,750 1210,751 1280,765 1350,783 1430,793 1500,788 1566,775 | 50,755 120,738 180,702 240,645 300,600 350,578 410,577 460,605 520,665 590,760 650,870 720,1020 800,1205 850,1280 880,1312 915,1324 960,1312 1020,1270 1080,1190 1130,1070 1180,950 1230,800 1290,600 1350,400 1400,250 1450,130 1480,95 1510,86 1545,92 | 0,118 50,190 110,290 170,430 240,625 310,825 380,970 430,1060 480,1125 520,1155 560,1162 600,1142 650,1070 710,930 773,815 830,720 890,655 930,640 970,641 1020,665 1050,690 1086,730";
const veloTeal = "8,1105 60,1000 120,880 185,750 250,630 310,540 345,460 380,400 420,380 440,385 470,412 540,470 590,510 620,563 670,610 685,637 695,634 705,652 743,680 770,710 810,750 825,741 845,745 880,770 930,784 950,788 970,780 1020,770 1080,752 1115,733 1145,741 1185,773 1220,780 1245,767 1300,790 1320,796 1370,803 1400,790 1450,780 1520,770 | 0,738 15,727 50,745 100,727 155,655 180,638 225,580 245,568 290,574 325,569 360,575 380,590 410,630 435,650 480,712 540,800 600,895 640,1010 700,1140 740,1215 780,1325 820,1346 870,1332 890,1302 920,1285 940,1288 990,1248 1030,1170 1080,1030 1130,880 1165,770 1223,590 1290,350 1350,170 1390,85 1420,54 1440,52 1470,75 1510,130 | 0,205 30,275 80,385 130,520 165,615 215,770 250,870 310,1000 400,1130 440,1172 465,1184 500,1170 530,1150 560,1100 600,1000 650,900 715,775 745,735 785,675 812,637 835,643 860,630 890,626 930,650 960,662 1020,720 1060,785 1086,818";

const highStops = [
  "92,173 135,171", "160,168 230,165 290,167 360,182 420,207 480,238 550,274", "601,294 620,297",
  "738,308 800,305 870,301 930,309 1000,324 1080,350 1160,380 1257,414", "1395,438 1412,438", "1434,438 1540,438",
  "| 396,378 450,361 520,351 580,356 640,375 700,420 760,485 820,553 880,620 940,682 1000,735 1070,775 1140,803 1220,831",
  "| 1268,849 1316,858", "| 1504,858 1545,852 | 0,845 40,841 80,840 120,845 170,862 220,893 270,925 300,945 325,957",
  "|| 661,963 720,945 773,928 820,918 870,914 920,920 960,940 1010,965 1088,1020",
];
const lowStops = [
  "15,195 90,198", "112,196 120,196", "553,309 601,322", "621,329 670,339 737,342", "1268,450 1340,462", "1366,466 1395,469",
  "1543,464 | 54,464", "| 81,465 150,462 220,457 292,440 340,425 394,406", "| 1219,880 1269,894",
  "| 1317,908 1380,915 1440,914 1502,905", "|| 328,1012 380,1040 430,1058 490,1063 540,1055 590,1040 659,1007",
];

const sells = "146,163 754,327 1420,442 | 480,497 1548,917 | 499,935 764,990";
const buys = "10,175 675,318 1352,475 | 67,452 1351,802 | 430,1000 508,1008";
const sellTags = "146,98 752,263 1420,376 | 478,430 1545,850 | 497,871 763,920";
const buyTags = "10,226 676,368 1352,530 | 67,505 1350,856 | 432,1053 508,1060";
const sellMarks = "136,209 746,376 1412,476 | 470,526 1539,973 | 490,967 757,1018";
const buyMarks = "665,277 1342,427 | 58,395 1342,745 | 420,964 499,944";

function drawPrice() {
  const svg = document.querySelector("#price .canvas");
  const at = (data) => points(data, priceUnit);
  dayGrid(svg, 109, 555);
  hline(svg, 358.5, "#008080");
  line(svg, straight(at(veloTeal)), "#008080");
  line(svg, curve(at(veloBlue)), "#0000ff");
  line(svg, curve(at(veloRed)), "#ff0000", { "stroke-dasharray": "3 3" });
  for (const band of [upperBand, lowerBand]) {
    line(svg, curve(at(band)), "#a6caf0", { "stroke-dasharray": "9 3 3 3 3 3" });
  }

  const knots = at(close).map(([x, y]) => [FIRST_X + Math.round((x - FIRST_X) / BAR) * BAR, y]);
  line(svg, straight(knots), "#6666ff");
  let dots = "";
  for (let x = FIRST_X; x <= LAST_X; x += BAR) {
    dots += `M${fmt(x - 1.3)} ${Math.round(valueAt(knots, x)) - 2}h3v4h-3z`;
  }
  add(svg, "path", { d: dots, fill: "#00ffff" });

  for (const s of highStops) {
    line(svg, curve(at(s)), "#ff0000", { "stroke-width": 4, "stroke-dasharray": "3.4 0.6", "shape-rendering": "auto" });
  }
  for (const s of lowStops) {
    line(svg, curve(at(s)), "#00ff00", { "stroke-width": 4, "stroke-dasharray": "3.4 0.6", "shape-rendering": "auto" });
  }

  at(sells).forEach(([x, y]) => add(svg, "path", { d: `M${x - 1.5} ${y - 6}h3v7h2l-3.500 5l-3.500 -5h2z`, fill: "#ff0000" }));
  at(buys).forEach(([x, y]) => add(svg, "path", { d: `M${x - 1.5} ${y + 7}h3v-9h2l-3.500 -5l-3.500 5h2z`, fill: "#00ff00" }));
  at(sellMarks).forEach(([x, y]) => add(svg, "path", { d: `M${x - 2} ${y - 3}l4 3l-4 3z`, fill: "#ff0000" }));
  at(buyMarks).forEach(([x, y]) => add(svg, "path", { d: `M${x - 2} ${y - 3}l4 3l-4 3z`, fill: "#00ff00" }));
  at(sellTags).forEach(([x, y]) => add(svg, "text", { x, y: y + 6 }, "-1"));
  at(buyTags).forEach(([x, y]) => add(svg, "text", { x, y: y + 6 }, "1"));
}

/* ---------- Leo pane ---------- */

const leo = "8,283 38,302 47,238 57,330 67,306 77,318 96,360 116,319 126,345 136,346 145,364 155,386 165,388 175,395 185,494 204,468 224,457 233,480 253,507 263,503 273,487 282,508 292,487 302,510 312,472 322,513 332,416 341,465 351,437 361,435 371,420 381,417 390,440 400,454 410,452 420,420 429,452 449,489 459,482 479,468 488,405 498,380 508,388 518,333 528,331 537,347 547,337 557,305 577,304 587,325 596,345 606,380 616,350 626,301 645,297 655,269 665,283 675,286 694,325 704,297 714,295 723,327 733,318 743,367 753,383 762,395 772,382 792,377 802,404 812,422 821,431 831,423 861,437 871,431 881,452 890,418 900,448 920,458 940,446 950,437 959,336 969,376 979,330 988,365 998,390 1008,350 1018,363 1027,405 1037,394 1047,397 1057,445 1067,465 1077,449 1086,475 1096,442 1106,440 1116,400 1125,442 1135,457 1155,463 1164,431 1184,412 1194,363 1204,373 1213,353 1223,345 1233,332 1243,345 1262,325 1272,298 1292,299 1302,303 1321,293 1331,316 1341,282 1351,316 1361,327 1380,308 1390,340 1400,352 1419,352 1429,320 1439,333 1449,365 1458,376 1468,393 1478,400 1498,389 1508,389 1517,394 1527,387 1537,307 1547,276 1566,250 |"
  + "8,250 20,262 38,278 48,258 58,270 77,223 87,230 97,279 106,200 116,170 136,164 146,180 155,239 175,187 185,227 195,212 204,243 214,220 234,200 253,278 263,240 273,263 283,240 292,167 312,184 322,177 332,190 351,170 361,216 371,245 380,290 400,340 410,330 430,378 439,405 459,419 469,427 479,443 488,447 498,430 508,455 518,465 528,501 547,519 557,504 567,542 577,524 596,527 606,572 626,590 635,567 645,608 655,612 665,633 675,604 684,598 694,562 704,572 714,609 724,572 733,602 753,604 763,572 773,583 792,527 802,487 821,438 831,409 841,410 851,415 880,411 890,430 910,478 939,483 949,443 959,430 968,461 978,457 988,433 998,423 1008,460 1028,504 1037,463 1047,438 1067,430 1077,436 1086,384 1096,447 1106,415 1116,380 1125,380 1135,340 1165,340 1184,378 1204,393 1214,370 1223,293 1243,313 1253,313 1262,302 1282,365 1292,355 1302,327 1311,325 1331,250 1341,228 1361,225 1380,213 1390,235 1400,273 1410,292 1420,294 1429,275 1439,294 1449,292 1459,256 1468,331 1498,327 1508,353 1517,363 1527,350 1537,363 1566,420 |"
  + "8,445 18,423 28,433 38,445 57,442 77,415 87,387 96,424 106,460 116,439 126,444 136,470 155,478 165,484 175,473 185,395 194,368 214,382 243,353 253,361 263,348 282,344 292,311 302,312 312,325 341,311 351,347 361,313 390,323 400,291 439,301 449,316 479,338 488,322 498,285 508,263 518,277 537,254 547,210 567,125 577,127 586,170 606,155 616,160 626,185 645,283 655,312 665,342 675,367 684,342 704,340 714,358 723,370 733,370 743,400 753,348 763,345 773,395 792,378 812,385 821,442 831,390 851,355 861,405 880,350 890,377 910,433 930,430 939,377 949,382 959,460 969,446 978,450 988,432 1008,436 1018,463 1027,496 1037,507 1047,470 1057,440 1067,458 1076,441 1086,446";
const macdTeal = "8,322 60,346 110,375 160,401 210,413 260,411 310,393 360,357 410,320 460,291 510,279 555,280 600,299 650,325 700,340 770,352 840,370 900,380 960,380 1000,368 1050,336 1100,318 1150,305 1200,304 1280,310 1320,299 1370,275 1430,250 1490,241 1566,246 | 50,253 106,266 150,283 200,315 240,358 292,424 340,490 390,558 430,602 470,634 513,647 550,637 600,605 640,568 665,530 720,468 773,415 820,370 865,319 920,255 980,200 1040,162 1090,146 1160,136 1223,133 1260,145 1310,182 1350,232 1400,312 1440,372 1480,427 1520,458 1566,474 | 20,472 60,462 100,437 150,383 214,318 265,262 310,207 350,179 390,173 430,183 470,208 510,252 550,303 590,348 640,387 700,430 773,488";
const macdSlow = "8,392 60,360 110,336 160,324 205,321 250,326 300,338 360,353 430,366 500,368 550,362 600,348 660,330 720,316 790,310 860,310 920,318 980,332 1040,348 1100,359 1160,362 1230,357 1290,347 1350,332 1420,314 1480,296 | 0,271 60,260 120,252 180,249 230,253 292,269 340,290 390,322 440,365 498,428 550,481 600,532 640,570 680,596 720,613 760,618 800,613 850,592 890,560 940,500 990,434 1037,378 1090,312 1140,254 1200,190 1260,142 1310,119 1350,109 1400,112 1450,130 1500,165 1566,229 | 40,268 90,328 145,385 190,420 240,437 280,440 320,433 370,409 430,360 480,318 530,275 580,245 630,230 680,230 720,242 773,275";
const macdFast = "8,303 60,303 100,312 150,328 200,354 250,374 310,383 360,382 400,370 450,353 500,328 550,312 600,304 650,300 720,299 770,308 820,322 870,348 920,368 970,377 1030,375 1080,361 1130,350 1180,335 1250,325 1300,306 1350,292 1400,269 1450,254 1510,246 1566,248 | 60,243 120,248 180,258 240,300 292,352 350,415 400,486 440,540 480,584 520,615 560,640 600,652 640,650 680,632 720,595 760,550 800,500 851,440 900,360 950,285 1000,218 1050,168 1100,128 1150,104 1200,85 1240,80 1280,90 1330,122 1370,160 1410,212 1450,268 1500,335 1566,406 | 30,440 70,465 110,474 150,472 190,455 230,426 270,380 310,325 350,275 400,228 440,205 480,192 520,194 560,208 600,240 640,272 680,312 720,360 773,427";
const trendLines = ["| 665,633 | 1343,307", "|| 575,127 1343,647"];

function drawLeo() {
  const svg = document.querySelector("#leo .canvas");
  const at = (data) => points(data, lowerUnit);
  dayGrid(svg, 577, 771);
  for (let x = 59.5; x < 1725; x += 128) {
    line(svg, `M${x} 582V768`, "#006e6e", { "stroke-dasharray": "18 6" });
  }
  hline(svg, 583.5, "#ff0000");
  hline(svg, 729.5, "#ff0000");
  hline(svg, 620.5, "#6b6b00");
  hline(svg, 693.5, "#6b6b00");
  hline(svg, 656.5, "#0000ff", { "stroke-dasharray": "3 3" });
  hline(svg, 666.5, "#800080");
  line(svg, curve(at(macdTeal)), "#008080");
  line(svg, curve(at(macdSlow)), "#ffff00");
  line(svg, curve(at(macdFast)), "#ffff00", { "stroke-dasharray": "3 3" });
  line(svg, straight(at(leo)), "#00ffff");
  for (const t of trendLines) line(svg, straight(at(t)), "#ff00ff");
}

/* ---------- CCI pane ---------- */

const cci = "8,958 30,940 60,921 95,925 125,947 145,965 165,992 185,1030 200,1080 215,1125 235,1165 260,1213 285,1252 300,1272 332,1277 350,1245 380,1205 415,1168 450,1140 490,1133 520,1112 555,1080 580,1048 625,1012 645,980 665,960 690,951 725,945 745,953 770,982 792,1020 812,1067 831,1112 851,1145 880,1196 900,1213 940,1236 958,1232 975,1203 1000,1165 1030,1128 1060,1117 1090,1113 1120,1118 1145,1137 1170,1157 1190,1161 1215,1148 1240,1105 1275,1060 1300,1022 1325,978 1350,952 1390,942 1410,950 1430,970 1455,978 1470,1005 1500,1067 1537,1117 1566,1068 |"
  + "25,1028 50,975 75,910 106,830 125,770 150,743 190,733 235,727 255,735 292,777 310,767 360,758 380,770 410,805 435,838 460,905 478,962 500,1040 525,1105 555,1173 600,1244 650,1274 680,1295 720,1275 760,1250 800,1222 840,1165 890,1112 920,1092 970,1087 1000,1098 1040,1125 1080,1132 1120,1132 1150,1112 1185,1085 1223,1083 1240,1048 1275,1012 1305,1023 1328,1010 1350,955 1370,903 1405,857 1430,856 1470,812 1490,837 1510,870 1566,1019 |"
  + "25,1090 60,1163 90,1197 125,1220 155,1228 185,1225 215,1180 240,1160 290,1105 320,1047 350,1005 385,992 425,963 450,950 495,961 545,920 560,883 585,808 605,770 625,723 645,713 670,725 690,760 715,810 735,885 755,955 790,1035 835,1100 900,1110 940,1131 960,1128 970,1147 1000,1148 1025,1163 1055,1190 1086,1194";
const cycleTeal = "8,1090 50,1187 97,1251 112,1240 125,1210 145,1200 165,1170 185,1130 200,1120 220,1060 235,1055 245,1010 265,980 285,915 300,910 320,875 345,820 362,815 380,767 410,785 440,828 460,900 480,942 495,1000 515,1062 535,1065 557,1112 600,1085 618,1097 635,1055 665,993 688,1015 695,1006 708,1042 730,1062 772,1152 785,1140 802,1131 815,1155 850,1152 870,1110 880,1055 910,985 930,925 965,825 990,777 1025,767 1045,795 1075,910 1105,985 1130,1060 1145,1150 1170,1205 1197,1203 1215,1152 1240,1075 1260,975 1290,878 1300,880 1320,837 1342,835 1358,870 1380,965 1405,1070 1430,1150 1460,1240 1487,1258 1505,1222 1525,1180 1540,1112 1566,950 |"
  + "20,820 38,772 48,777 70,735 92,714 106,745 120,770 140,820 155,900 165,990 190,1105 215,1208 235,1220 265,1268 277,1262 292,1213 325,1140 350,1008 360,1003 375,965 390,950 405,967 445,965 475,1030 490,1090 528,1147 555,1125 590,1020 610,975 625,915 640,900 665,843 700,855 715,857 735,885 760,925 790,935 802,960 815,940 830,932 850,890 865,882 900,897 920,945 945,1015 970,1090 990,1175 1015,1243 1037,1293 1055,1280 1075,1235 1100,1105 1125,985 1150,880 1165,825 1185,805 1207,770 1225,795 1245,840 1270,925 1285,955 1300,1035 1325,1105 1350,1125 1370,1090 1400,1042 1412,1063 1455,1045 1470,1013 1500,1028 1525,1100 1566,1193 |"
  + "8,1195 45,1140 55,1105 75,1095 95,995 115,925 135,848 160,828 185,815 200,787 225,780 250,825 275,910 305,958 320,970 350,985 365,1025 380,1078 410,1118 460,1160 488,1198 525,1145 550,1055 575,950 610,870 640,848 670,870 700,990 735,1108 755,1235 790,1262 810,1220 830,1130 860,960 890,830 915,787 930,750 945,775 962,785 990,905 1010,970 1035,1095 1072,1165 1086,1157";
const cycleBlue = "8,938 40,1030 80,1145 115,1208 150,1229 190,1205 235,1145 270,1070 315,970 360,880 410,810 445,790 480,818 530,935 580,1060 625,1098 660,1085 700,1033 730,1020 760,1038 800,1105 850,1145 880,1143 920,1085 970,960 1020,828 1060,785 1090,808 1130,900 1170,1030 1200,1140 1238,1182 1265,1150 1300,1020 1340,890 1378,862 1410,895 1450,1030 1490,1170 1530,1232 | 0,1178 40,1000 80,830 135,743 165,770 200,900 240,1080 270,1180 310,1237 350,1185 390,1060 420,985 455,962 495,990 530,1060 580,1125 610,1093 650,1000 690,895 740,857 790,885 850,937 890,905 930,900 965,950 1010,1080 1050,1210 1095,1262 1130,1190 1170,1030 1220,825 1260,793 1300,850 1340,990 1370,1080 1400,1100 1460,1060 1520,1030 1566,1080 | 25,1140 60,1167 100,1130 150,980 200,850 262,796 310,860 370,960 420,1040 480,1130 540,1175 570,1130 610,1000 655,885 690,868 720,910 760,1030 800,1190 832,1235 860,1185 900,1010 950,835 985,787 1020,830 1060,960 1086,1063 1106,1130";
const stoc = "8,1135 60,1060 100,995 150,925 200,870 235,832 260,885 290,970 330,1080 370,1200 400,1275 425,1294 500,1294 528,1275 570,1180 610,1100 640,1030 680,900 740,752 770,718 810,715 840,762 900,868 930,935 960,1000 1025,1020 1060,1062 1120,1190 1160,1260 1190,1283 1220,1235 1260,1150 1310,1000 1370,840 1400,800 1450,745 1470,728 1510,772 1550,801 | 0,793 40,730 60,715 400,715 440,770 470,870 500,1020 525,1150 545,1255 565,1294 830,1294 860,1280 930,1247 980,1200 1040,1140 1100,1060 1150,960 1200,760 1225,715 1540,715 | 0,735 30,780 70,880 110,980 150,1110 185,1240 210,1294 275,1294 310,1255 350,1218 380,1200 420,1100 460,985 500,900 545,770 575,715 645,714 690,752 750,830 800,940 860,1060 930,1170 1000,1285 1015,1294 1086,1294";
const stocHighs = "822,734 1478,734 | 419,737 | 0,734 675,734";
const stocLows = "528,1275 1194,1281 | 861,1281 | 302,1272";

function clip(svg, id, y, height) {
  const cp = add(svg, "clipPath", { id });
  add(cp, "rect", { x: 3, y, width: LAST_X - 3, height });
  return { "clip-path": `url(#${id})` };
}

function drawCci() {
  const svg = document.querySelector("#cci .canvas");
  const at = (data, shift) => points(data, lowerUnit, shift);
  const whole = clip(svg, "clip-all", 780, 220);
  const over = clip(svg, "clip-over", 780, 24);
  const under = clip(svg, "clip-under", 945, 50);
  dayGrid(svg, 791, 988);

  const index = at(cci);
  let bars = "";
  for (let x = FIRST_X + 0.2; x <= LAST_X; x += BAR) bars += `M${fmt(x)} 875V${fmt(valueAt(index, x))}`;
  line(svg, bars, "#484848");

  hline(svg, 804.5, "#808080");
  hline(svg, 944.5, "#808080");
  hline(svg, 890.5, "#008080");
  line(svg, straight(at(stoc)), "#c86400", { "stroke-dasharray": "3 3" });
  line(svg, straight(at(cycleTeal)), "#008080");
  line(svg, curve(at(cycleBlue)), "#0000ff", whole);
  line(svg, curve(at(cycleBlue, -20)), "#ff0000", { "stroke-dasharray": "4 3", ...whole });
  line(svg, straight(index), "#b4b4b4");
  line(svg, straight(index), "#ff0000", over);
  line(svg, straight(index), "#00ffff", under);
  at(stocHighs).forEach(([cx, cy]) => add(svg, "circle", { cx, cy, r: 4, fill: "#00ffff" }));
  at(stocLows).forEach(([cx, cy]) => add(svg, "circle", { cx, cy, r: 4, fill: "#ff0000" }));
}

/* ---------- scales and dates ---------- */

// [text, y, background]; entries without text are bare ticks
const scales = {
  price: { top: 90, height: 468, rows: [
    ["4,550.00", 158], ["4,500.00", 193], ["4,450.00", 229], ["4,400.00", 264], ["4,350.00", 299], ["4,300.00", 334],
    ["4,250.00", 370], ["4,200.00", 405], ["4,100.00", 476], ["4,050.00", 511],
    ["4,378.20", 281, "#a6caf0"], ["4,152.43", 441, "#ff0000"], ["4,124.30", 461, "#a6caf0"], ["4,013.00", 539, "#6666ff"],
  ] },
  leo: { top: 559, height: 214, rows: [
    ["6.00", 601], ["2.00", 638], ["-2.00", 674], ["-6.00", 711], ["-10.00", 748],
    ["8.00", 585, "#ff0000"], ["4.00", 622, "#6b6b00"], ["0.00", 658, "#0000ff"], ["-4.00", 695, "#6b6b00"],
    ["-4.89", 703, "#00ffff"], ["-8.00", 731, "#ff0000"],
  ] },
  cci: { top: 774, height: 216, rows: [
    ["150.00", 786], ["50.00", 845], ["", 875], ["-50.00", 903], ["", 932], ["-150.00", 962],
    ["120.00", 806, "#808080"], ["-120.00", 946, "#808080"], ["-135.49", 955, "#00ffff"],
  ] },
};

for (const id in scales) {
  const { top, height, rows } = scales[id];
  const scale = document.querySelector(`#${id} .scale`);
  for (const [text, y, color] of rows) {
    const row = document.createElement("span");
    row.textContent = text;
    row.style.top = `${(((y + 0.5 - top) / height) * 100).toFixed(2)}%`;
    if (color) {
      row.className = "tag";
      row.style.background = color;
    }
    scale.appendChild(row);
  }
}

const dates = "4/06 4/07 4/08 4/11 4/12 4/13 4/14 4/19 4/20 4/21 4/22 4/25 4/26 4/27 4/28 4/29 5/02 5/03 5/04 5/05 5/06 5/09 5/10";
dates.split(" ").forEach((day) => {
  const li = document.createElement("li");
  li.textContent = day;
  document.querySelector(".dates").appendChild(li);
});

const ticks = document.querySelector(".ticks");
for (let k = 0; k <= 26; k++) {
  if ((k > 6 && k < 11) || (k > 15 && k < 20)) continue;
  line(ticks, `M${27.5 + 68 * k} 0V5`, "#fff");
}
for (const x of [75.5, 303.5, 987.5, 1595.5]) line(ticks, `M${x} 0V11`, "#fff");

drawPrice();
drawLeo();
drawCci();
```
